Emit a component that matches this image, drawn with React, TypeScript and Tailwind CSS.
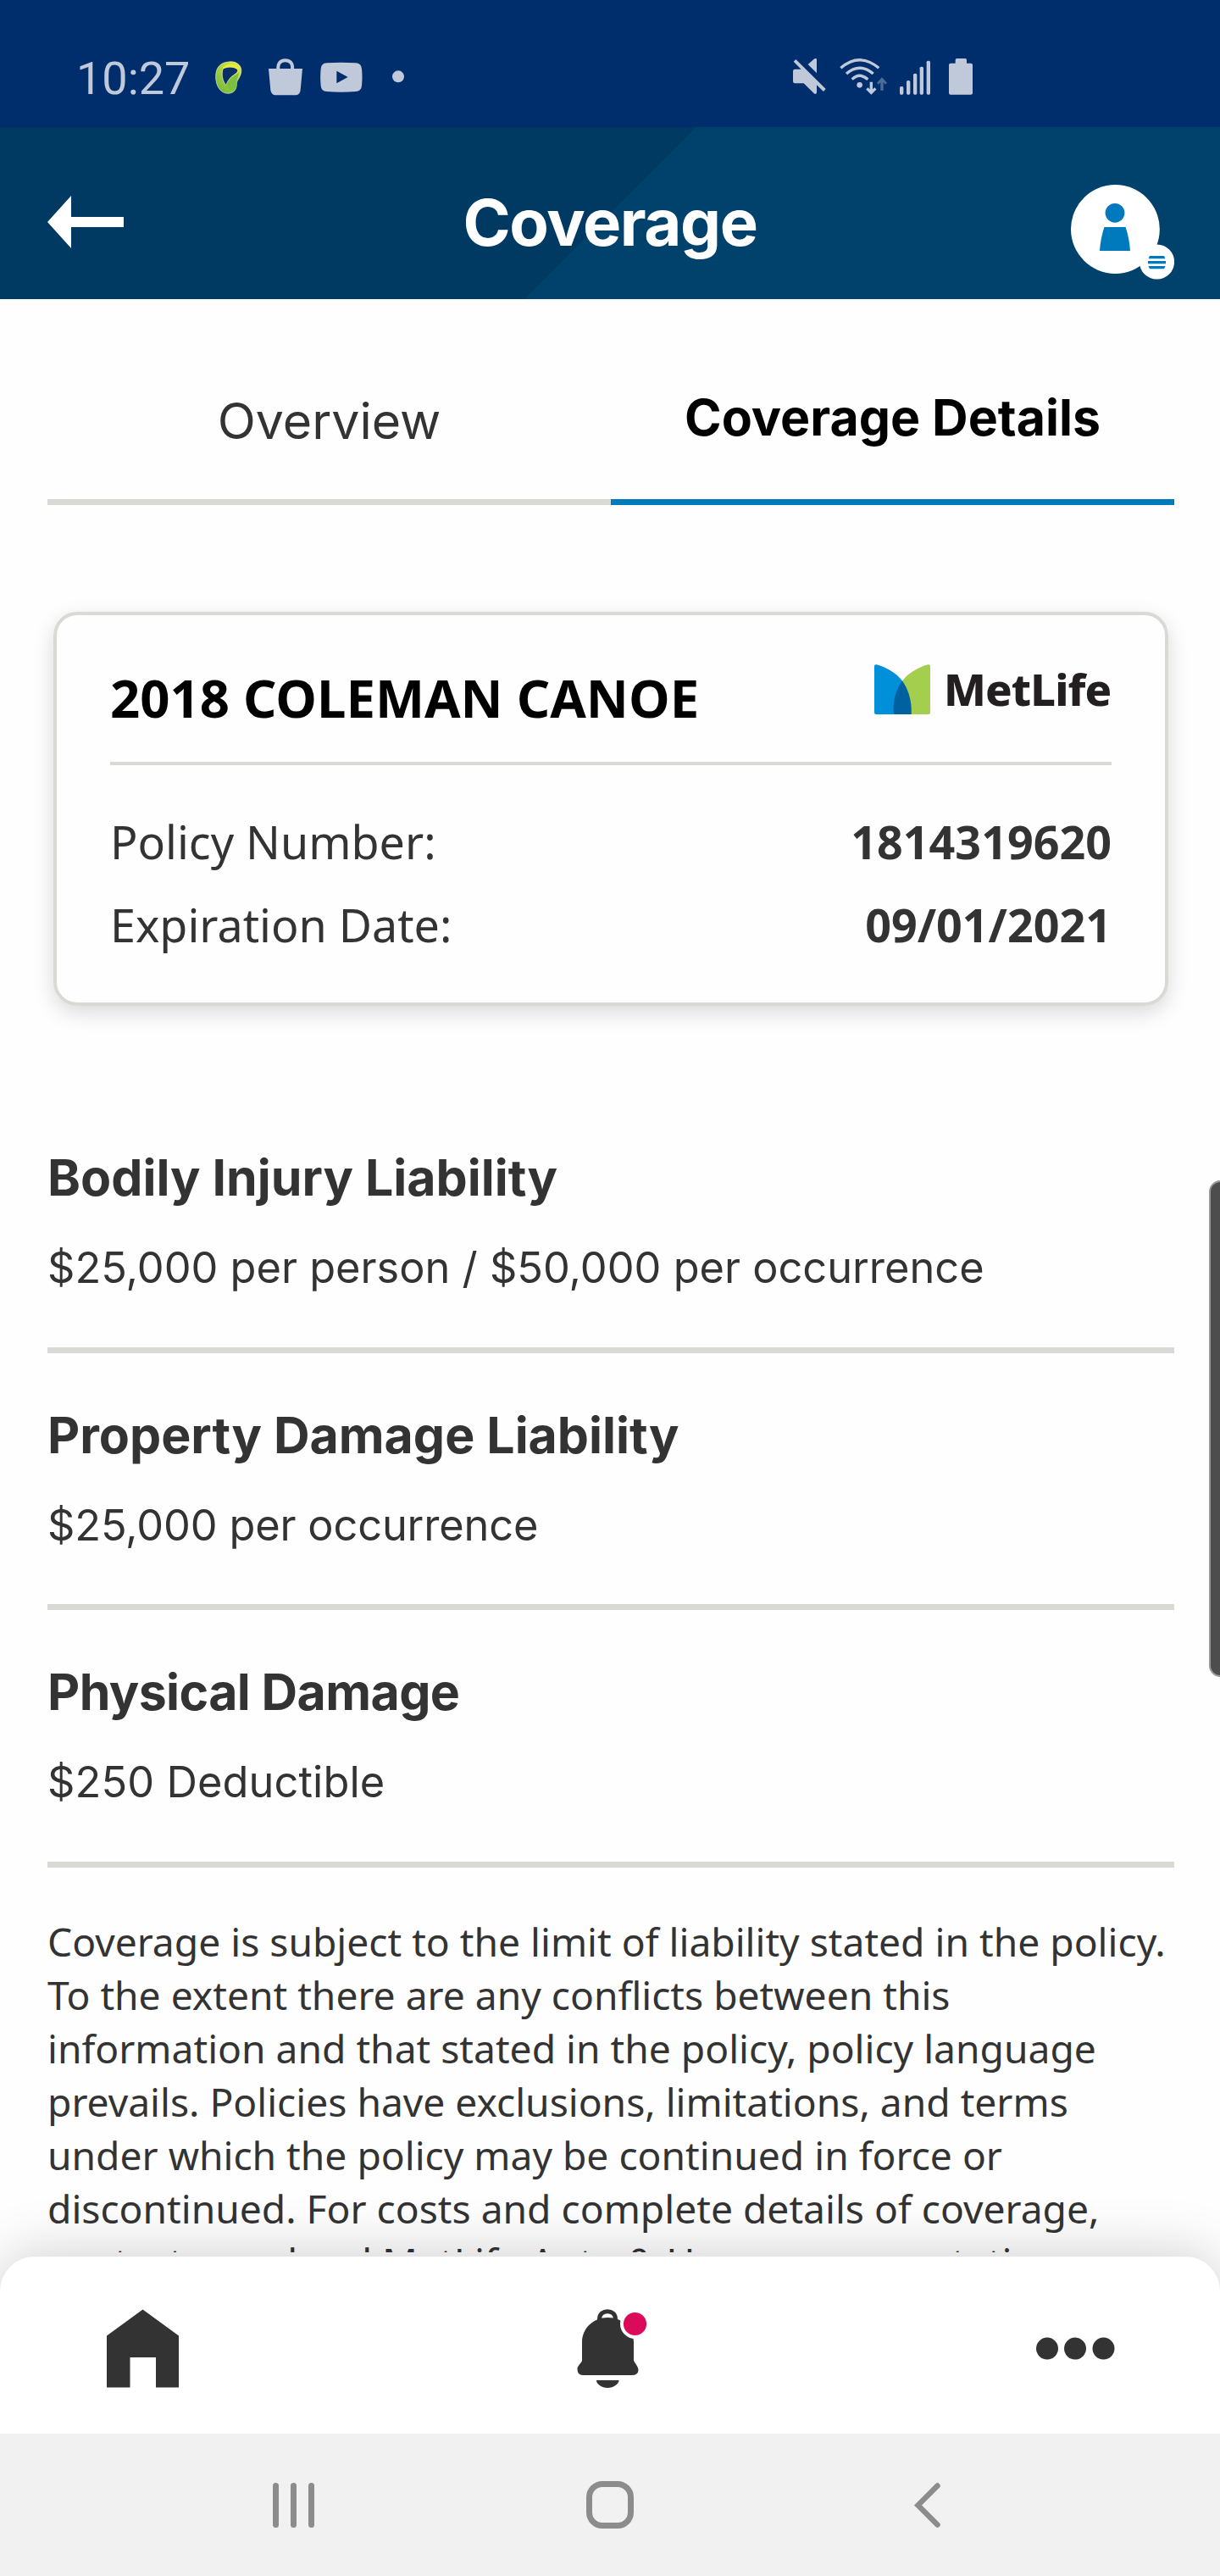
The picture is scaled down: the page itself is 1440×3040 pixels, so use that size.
import type { ReactNode } from "react";

const coverages = [
  { title: "Bodily Injury Liability", value: "$25,000 per person / $50,000 per occurrence", titleSpacing: "tracking-[0px]", valueSpacing: "tracking-[0px]" },
  { title: "Property Damage Liability", value: "$25,000 per occurrence", titleSpacing: "tracking-[0px]", valueSpacing: "tracking-[-0.15px]" },
  { title: "Physical Damage", value: "$250 Deductible", titleSpacing: "tracking-[-0.6px]", valueSpacing: "tracking-[0.1px]" },
];

function StatusIcon({ x, w, className, children }: { x: number; w: number; className: string; children: ReactNode }) {
  return (
    <svg className={`shrink-0 ${className}`} width={w / 3} height={145 / 3} viewBox={`${x} 40 ${w} 145`} fill="#bfc9da">
      {children}
    </svg>
  );
}

function StatusBar() {
  return (
    <div className="flex h-[150px] items-center bg-[#002e6d] pt-[35px] pl-[90px]">
      <span className="w-[164px] font-[Roboto] text-[54px] leading-none text-[#bfc9da]">10:27</span>
      <StatusIcon x={27} w={96} className="">
        <defs>
          <linearGradient id="leaf" x1="0" y1="1" x2="0.8" y2="0">
            <stop offset="0" stopColor="#6db33f" />
            <stop offset="0.5" stopColor="#9fce3c" />
            <stop offset="1" stopColor="#e2ea35" />
          </linearGradient>
        </defs>
        <path d="M75 55C100 51 122 66 119 90C117 110 105 118 103 130C104 152 94 166 72 167C45 166 29 140 29 107C29 75 45 57 75 55Z" fill="url(#leaf)" stroke="#e6f2d8" strokeWidth="2" />
        <path d="M55 79C75 70 100 72 107 84C108 97 86 102 78 115C71 124 68 130 66 138C54 125 47 100 55 79Z" fill="#0b2f63" stroke="#f4fae8" strokeWidth="2" />
        <path d="M66 140C70 128 76 118 88 108C96 104 106 98 112 92C108 110 102 118 103 130C104 146 98 156 90 156C80 156 72 150 66 140Z" fill="#7cc03f" />
        <path d="M53 77C62 61 98 58 110 72L108 82C96 72 70 70 55 79Z" fill="#e6ec38" />
      </StatusIcon>
      <StatusIcon x={216} w={121} className="ml-[31px]">
        <path d="M216 79H336L329 155Q327 173 311 173H241Q226 173 223 155Z" />
        <path d="M250 82C248 58 260 50 275 50C290 50 303 58 300 82" fill="none" stroke="#bfc9da" strokeWidth="12" />
      </StatusIcon>
      <StatusIcon x={401} w={149} className="ml-[21px]">
        <path fillRule="evenodd" d="M424 59Q475 55 526 59Q547 60 548 80Q551 110 548 139Q547 159 526 160Q475 164 424 160Q404 159 403 139Q400 110 403 80Q404 60 424 59ZM459 87V131L499 109Z" />
      </StatusIcon>
      <StatusIcon x={654} w={42} className="ml-[35px]">
        <circle cx="675" cy="107" r="21" />
      </StatusIcon>
      <StatusIcon x={32} w={117} className="ml-[459px]">
        <path d="M116 47V95L85 64L108 44Q116 41 116 47Z" />
        <path d="M32 88Q32 81 39 81H61L34 54L42 46L148 151L140 160L116 137V164Q115 170 108 168L70 131H39Q32 131 32 124Z" />
      </StatusIcon>
      <StatusIcon x={196} w={168} className="ml-[16px]">
        <g fill="none" stroke="#bfc9da" strokeWidth="10">
          <path d="M200 77Q267 20 335 77" />
          <path d="M220 97Q267 56 315 97" />
          <path d="M240 117Q267 91 296 117" />
          <path d="M308 126V162M293 149L308 164L323 149" />
        </g>
        <path d="M346 110L364 129L358 135L351 128V156H341V128L334 135L328 129Z" fillOpacity=".4" />
        <circle cx="267" cy="137" r="10" />
      </StatusIcon>
      <StatusIcon x={411} w={109} className="ml-[15px]">
        <rect x="411" y="142" width="13" height="29" rx="5" />
        <rect x="435" y="121" width="13" height="50" rx="5" />
        <rect x="459" y="96" width="13" height="75" rx="5" />
        <rect x="482" y="72" width="13" height="99" rx="5" />
        <rect x="506" y="51" width="13" height="120" rx="5" />
      </StatusIcon>
      <StatusIcon x={585} w={84} className="ml-[22px]">
        <path d="M608 60V48Q608 43 613 43H643Q648 43 648 48V60H663Q669 60 669 66V165Q669 171 663 171H591Q585 171 585 165V66Q585 60 591 60Z" />
      </StatusIcon>
    </div>
  );
}

function Header() {
  return (
    <header className="grid h-[203px] grid-cols-[1fr_auto_1fr] items-center bg-[linear-gradient(135deg,#003962_50%,#00426c_50.05%)] px-[54px] pt-[21px]">
      <svg className="ml-[2px]" width="90" height="62" viewBox="0 0 90 62" fill="#fff">
        <path d="M0 31L28 0V25H90V37H28V62Z" />
      </svg>
      <h1 className="font-[Inter] text-[76px] leading-none font-bold tracking-[-1.4px] text-white">Coverage</h1>
      <svg className="mt-[24px] justify-self-end" width="122" height="112" viewBox="1264 218 122 112">
        <circle cx="1316.4" cy="270.5" r="52.4" fill="#fff" />
        <circle cx="1316" cy="251.3" r="11.4" fill="#007abc" />
        <path d="M1303.5 268H1328.5Q1333 281 1334 296H1298Q1299 281 1303.5 268Z" fill="#007abc" />
        <circle cx="1365.5" cy="309" r="20.6" fill="#fff" />
        <path d="M1357 302H1374L1375.5 305.2H1355.5ZM1355 308H1376V311.2H1355ZM1355.5 314H1375.5L1374 317.2H1357Z" fill="#007abc" />
      </svg>
    </header>
  );
}

function MetLifeLogo() {
  return (
    <div className="mb-[21px] flex items-center gap-[16px]">
      <svg width="66" height="59" viewBox="0 0 65 59" preserveAspectRatio="none">
        <path d="M0 2Q0 0 2.500 0.300C16 4 27 12 32.500 19.500L34 40L22 59H2Q0 59 0 57Z" fill="#0090da" />
        <path d="M65 2Q65 0 62.500 0.300C49 4 38 12 32.500 19.500L32 40L42 59H63Q65 59 65 57Z" fill="#a4ce4e" />
        <path d="M32.500 19.500C38.500 28 44 42 43 59H22.500C20.500 44 26 28 32.500 19.500Z" fill="#0061a0" />
      </svg>
      <span className="w-[198px] font-['Noto_Sans'] text-[52.3px] leading-[56px] font-extrabold tracking-[-0.9px] whitespace-nowrap text-[#231f20]">MetLife</span>
    </div>
  );
}

function PolicyCard() {
  return (
    <section className="mr-[61px] mt-[126px] ml-[63px] h-[465px] rounded-[28px] border-4 border-[#d9d9d5] px-[63px] shadow-[0_8px_24px_rgba(0,0,0,0.15)]">
      <div className="flex h-[177px] items-center justify-between border-b-4 border-[#d9d9d5] pt-[22px]">
        <h2 className="font-['Noto_Sans'] text-[61.6px] leading-none font-bold whitespace-nowrap text-black">2018 COLEMAN CANOE</h2>
        <MetLifeLogo />
      </div>
      <dl className="pt-[41px] font-['Noto_Sans'] text-[53.8px] leading-[98px] text-[#333]">
        <div className="flex justify-between">
          <dt>Policy Number:</dt>
          <dd className="font-bold">1814319620</dd>
        </div>
        <div className="flex justify-between">
          <dt>Expiration Date:</dt>
          <dd className="font-bold">09/01/2021</dd>
        </div>
      </dl>
    </section>
  );
}

function BottomNav() {
  return (
    <nav className="relative z-10 mt-[5px] flex h-[209px] items-start justify-between rounded-t-[41px] bg-white px-[124px] pt-[61px] shadow-[0_0_70px_rgba(0,0,0,0.2)]">
      <svg className="ml-[2px]" width="86" height="94" viewBox="0 0 86 94" fill="#333">
        <path d="M42.500 1.500L85 32.500V93.500H58V58H27.500V93.500H0V32.500Z" />
      </svg>
      <svg className="ml-[14px]" width="90" height="96" viewBox="680 2724 90 96">
        <path d="M707.500 2742V2737C707.500 2724.500 726.500 2724.500 726.500 2737V2742" fill="none" stroke="#333" strokeWidth="5" />
        <path d="M717.500 2735C735 2735 748 2748 748 2764V2786C750 2790 753.500 2793 753.500 2797Q753 2803 746 2803H688Q681.500 2803 681.500 2796C681.500 2792 685 2790 687 2786V2764C687 2748 700 2735 717.500 2735Z" fill="#333" />
        <path d="M704 2809H730.500C731 2813 724 2818 717.200 2818C710 2818 703.500 2813 704 2809Z" fill="#333" />
        <circle cx="749.5" cy="2742.500" r="17.500" fill="#fff" />
        <circle cx="749.5" cy="2742.500" r="13.600" fill="#db0a5b" />
      </svg>
      <svg width="93" height="94" viewBox="1223.500 2724 93 94" fill="#333">
        <circle cx="1236.500" cy="2771.600" r="13" />
        <circle cx="1269.500" cy="2771.600" r="13" />
        <circle cx="1303" cy="2771.600" r="13" />
      </svg>
    </nav>
  );
}

function SystemBar() {
  return (
    <div className="relative z-20 flex h-[168px] items-center bg-[#f1f1f1]">
      <div className="ml-[322px] flex gap-[14px]">
        <i className="h-[53px] w-[7px] rounded-full bg-[#8c8c8c]" />
        <i className="h-[53px] w-[7px] rounded-full bg-[#8c8c8c]" />
        <i className="h-[53px] w-[7px] rounded-full bg-[#8c8c8c]" />
      </div>
      <i className="ml-[321px] size-[56px] rounded-[19px] border-[7px] border-[#8c8c8c]" />
      <svg className="ml-[331px]" width="31" height="53" viewBox="0 0 31 53" fill="none" stroke="#8c8c8c" strokeWidth="6.500" strokeLinecap="round">
        <path d="M27.500 3.500L4.500 26.500L27.500 49.500" />
      </svg>
    </div>
  );
}

export default function App() {
  return (
    <div className="relative h-[3040px] w-[1440px] overflow-hidden bg-[#fefefe]">
      <StatusBar />
      <Header />
      <main className="h-[2305px] overflow-hidden">
        <div className="mr-[54px] ml-[56px] grid h-[243px] grid-cols-2 font-[Inter] text-[59px]">
          <div className="flex items-center justify-center border-b-[7px] border-[#d9d9d5] pt-[52px] text-[#333]">Overview</div>
          <div className="flex items-center justify-center border-b-[7px] border-[#007abc] pt-[45px] font-bold text-black">Coverage Details</div>
        </div>
        <PolicyCard />
        <div className="mt-[106px] mr-[54px] ml-[56px] font-[Inter] text-[#333]">
          {coverages.map((c) => (
            <section key={c.title} className="h-[303.67px] border-b-[7px] border-[#d9d9d5] pt-[61px]">
              <h3 className={`text-[59px] leading-[72px] font-bold ${c.titleSpacing}`}>{c.title}</h3>
              <p className={`mt-[40px] text-[50.5px] leading-[60px] ${c.valueSpacing}`}>{c.value}</p>
            </section>
          ))}
        </div>
        <p className="mt-[56px] ml-[56px] font-['Noto_Sans'] text-[46.2px] leading-[63px] whitespace-nowrap text-[#333]">
          Coverage is subject to the limit of liability stated in the policy.
          <br />
          To the extent there are any conflicts between this
          <br />
          information and that stated in the policy, policy language
          <br />
          prevails. Policies have exclusions, limitations, and terms
          <br />
          under which the policy may be continued in force or
          <br />
          discontinued. For costs and complete details of coverage,
          <br />
          contact your local MetLife Auto &amp; Home representative
        </p>
      </main>
      <BottomNav />
      <SystemBar />
      <div className="absolute top-[1393px] -right-[14px] h-[586px] w-[27px] rounded-[14px] border-2 border-[#999] bg-[#4d4d4d]" />
    </div>
  );
}
